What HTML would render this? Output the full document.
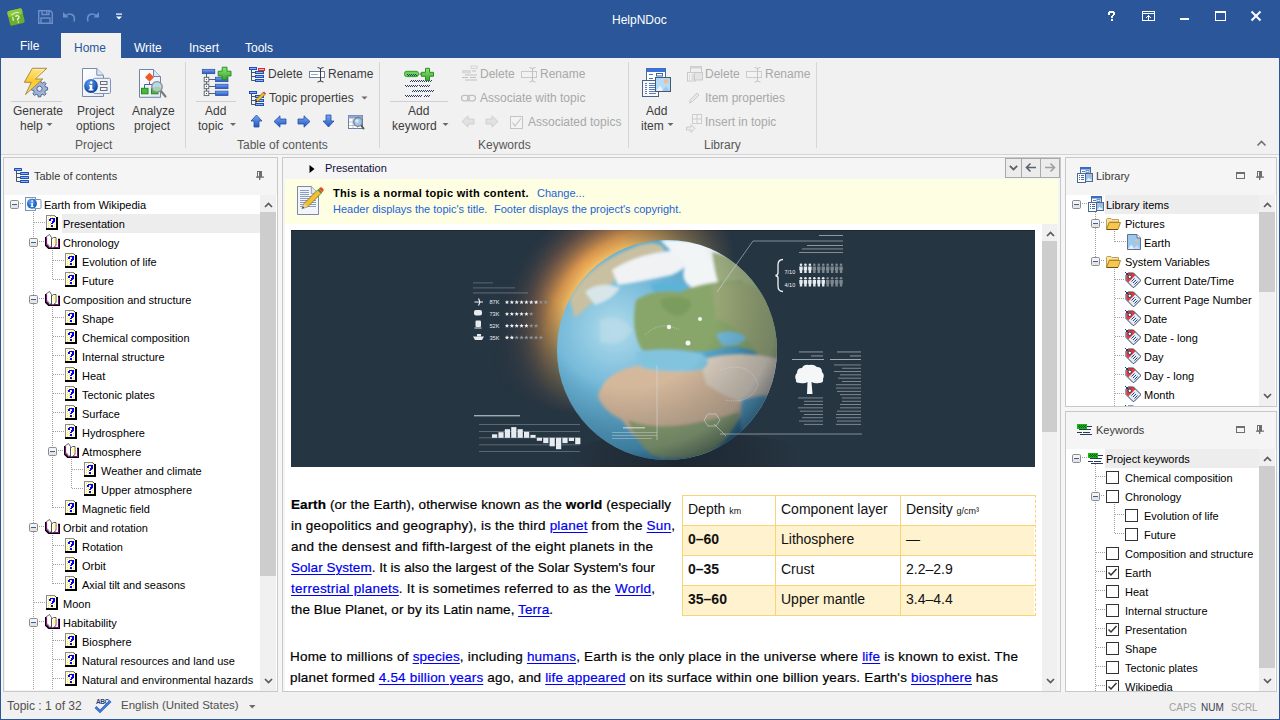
<!DOCTYPE html><html><head><meta charset="utf-8"><style>
*{margin:0;padding:0;box-sizing:border-box}
html,body{width:1280px;height:720px;overflow:hidden;background:#f1f1f1;font-family:"Liberation Sans",sans-serif;color:#000}
.a{position:absolute}
.t{position:absolute;white-space:nowrap;line-height:1}
.rb{font-size:12px;color:#3c3c3c}
.dis{color:#a8a8a8}
.grp{font-size:12px;color:#585858}
.sep{position:absolute;width:1px;background:#d6d6d6}
.tr{position:absolute;white-space:nowrap;font-size:11px;line-height:19px;height:19px;color:#000;padding-top:1px}
svg{position:absolute;overflow:visible}
.lnk{color:#0000f0;text-decoration:underline;text-underline-offset:2px}
</style></head><body>
<div class="a" style="left:0;top:0;width:1280px;height:58px;background:#2b579a"></div>
<div class="a" style="left:0;top:0;width:1px;height:720px;background:#2b579a"></div>
<div class="a" style="left:1279px;top:0;width:1px;height:720px;background:#2b579a"></div>
<div class="a" style="left:0;top:719px;width:1280px;height:1px;background:#2b579a"></div>
<div class="t" style="left:612px;top:14px;font-size:12px;color:#fff">HelpNDoc</div>
<div class="a" style="left:61px;top:33px;width:60px;height:26px;background:#f1f1f1"></div>
<div class="t" style="left:20px;top:40px;font-size:12px;color:#fff">File</div>
<div class="t" style="left:74px;top:42px;font-size:12px;color:#2b579a">Home</div>
<div class="t" style="left:134px;top:42px;font-size:12px;color:#fff">Write</div>
<div class="t" style="left:189px;top:42px;font-size:12px;color:#fff">Insert</div>
<div class="t" style="left:245px;top:42px;font-size:12px;color:#fff">Tools</div>
<div class="a" style="left:1px;top:154px;width:1278px;height:1px;background:#d4d4d4"></div>
<div class="a" style="left:1px;top:155px;width:1278px;height:2px;background:#f7f7f7"></div>
<div class="t rb" style="left:13px;top:105px;">Generate</div>
<div class="t rb" style="left:20px;top:120px;">help</div>
<div class="t rb" style="left:77px;top:105px;">Project</div>
<div class="t rb" style="left:76px;top:120px;">options</div>
<div class="t rb" style="left:132px;top:105px;">Analyze</div>
<div class="t rb" style="left:134px;top:120px;">project</div>
<div class="t grp" style="left:75px;top:139px;">Project</div>
<div class="sep" style="left:185px;top:62px;height:86px"></div>
<div class="t rb" style="left:205px;top:105px;">Add</div>
<div class="t rb" style="left:198px;top:120px;">topic</div>
<div class="t rb" style="left:268px;top:68px;">Delete</div>
<div class="t rb" style="left:328px;top:68px;">Rename</div>
<div class="t rb" style="left:269px;top:92px;">Topic properties</div>
<div class="t grp" style="left:237px;top:139px;">Table of contents</div>
<div class="sep" style="left:379px;top:62px;height:86px"></div>
<div class="t rb" style="left:408px;top:105px;">Add</div>
<div class="t rb" style="left:392px;top:120px;">keyword</div>
<div class="t rb dis" style="left:480px;top:68px;">Delete</div>
<div class="t rb dis" style="left:540px;top:68px;">Rename</div>
<div class="t rb dis" style="left:480px;top:92px;">Associate with topic</div>
<div class="t rb dis" style="left:528px;top:116px;">Associated topics</div>
<div class="t grp" style="left:478px;top:139px;">Keywords</div>
<div class="sep" style="left:628px;top:62px;height:86px"></div>
<div class="t rb" style="left:646px;top:105px;">Add</div>
<div class="t rb" style="left:641px;top:120px;">item</div>
<div class="t rb dis" style="left:705px;top:68px;">Delete</div>
<div class="t rb dis" style="left:765px;top:68px;">Rename</div>
<div class="t rb dis" style="left:705px;top:92px;">Item properties</div>
<div class="t rb dis" style="left:705px;top:116px;">Insert in topic</div>
<div class="t grp" style="left:704px;top:139px;">Library</div>
<div class="sep" style="left:816px;top:62px;height:86px"></div>
<div class="a" style="left:11px;top:101px;width:51px;height:1px;background:#d0d0d0"></div>
<div class="a" style="left:196px;top:101px;width:40px;height:1px;background:#d0d0d0"></div>
<div class="a" style="left:390px;top:101px;width:58px;height:1px;background:#d0d0d0"></div>
<div class="a" style="left:1px;top:155px;width:1278px;height:537px;background:#f6f6f6"></div>
<div class="a" style="left:3px;top:157px;width:275px;height:535px;border:1px solid #c8c8c8;background:#f5f5f5"></div>
<div class="a" style="left:282px;top:157px;width:779px;height:535px;border:1px solid #c8c8c8;background:#f5f5f5"></div>
<div class="a" style="left:1065px;top:157px;width:212px;height:250px;border:1px solid #c8c8c8;background:#f5f5f5"></div>
<div class="a" style="left:1065px;top:411px;width:212px;height:281px;border:1px solid #c8c8c8;background:#f5f5f5"></div>
<div class="t " style="left:7px;top:700px;font-size:12px;color:#505050">Topic : 1 of 32</div>
<div class="t " style="left:121px;top:700px;font-size:11.5px;color:#505050">English (United States)</div>
<svg style="left:94px;top:697px" width="18" height="17"><text x="2" y="6.5" font-family="Liberation Sans" font-weight="bold" font-size="6.5" fill="#1f3f7a" letter-spacing="-0.4">ABC</text><path d="M1.5 10L6 14.5L16.5 4" fill="none" stroke="#2a5fc8" stroke-width="2.6"/><path d="M1.5 10L6 14.5L16.5 4" fill="none" stroke="#5a90ea" stroke-width="1"/></svg>
<svg style="left:249px;top:705px" width="7" height="4"><path d="M0 0H6.5L3.25 3.5Z" fill="#6a6a6a"/></svg>
<div class="t " style="left:1169px;top:703px;font-size:10px;color:#a0a0a0">CAPS</div>
<div class="t " style="left:1201px;top:703px;font-size:10px;color:#404050">NUM</div>
<div class="t " style="left:1231px;top:703px;font-size:10px;color:#a0a0a0">SCRL</div>
<svg width="0" height="0" style="position:absolute"><defs>
<symbol id="minus" viewBox="0 0 9 9"><rect x="0.5" y="0.5" width="8" height="8" rx="1.2" fill="#f4f4f4" stroke="#8c8c8c"/><rect x="1" y="5" width="7" height="3" fill="#e4e4e4"/><rect x="2" y="4" width="5" height="1" fill="#3c5aa8"/></symbol>
<symbol id="help" viewBox="0 0 12 15" shape-rendering="crispEdges"><rect x="0" y="0" width="10" height="13" fill="#fff"/><rect x="0" y="0" width="9" height="1" fill="#8a8a8a"/><rect x="0" y="0" width="1" height="13" fill="#8a8a8a"/><rect x="9" y="1" width="1" height="1" fill="#555"/><rect x="10" y="2" width="2" height="13" fill="#000"/><rect x="0" y="13" width="12" height="2" fill="#000"/><g fill="#ffee00"><rect x="4" y="1" width="1" height="1"/><rect x="8" y="1" width="1" height="1"/><rect x="2" y="2" width="1" height="1"/><rect x="6" y="2" width="1" height="1"/><rect x="2" y="4" width="1" height="1"/><rect x="6" y="4" width="1" height="1"/><rect x="2" y="6" width="1" height="1"/><rect x="4" y="7" width="1" height="1"/><rect x="8" y="7" width="1" height="1"/><rect x="2" y="8" width="1" height="1"/><rect x="4" y="9" width="1" height="1"/><rect x="8" y="9" width="1" height="1"/><rect x="2" y="10" width="1" height="1"/><rect x="4" y="11" width="1" height="1"/><rect x="8" y="11" width="1" height="1"/><rect x="2" y="12" width="1" height="1"/><rect x="6" y="12" width="1" height="1"/></g><g fill="#0000ff"><rect x="3" y="4" width="1" height="1"/><rect x="3" y="5" width="1" height="1"/><rect x="4" y="3" width="1" height="1"/><rect x="4" y="4" width="1" height="1"/><rect x="4" y="5" width="1" height="1"/><rect x="5" y="3" width="1" height="1"/><rect x="5" y="8" width="1" height="1"/><rect x="5" y="10" width="1" height="1"/><rect x="5" y="11" width="1" height="1"/><rect x="6" y="3" width="1" height="1"/><rect x="6" y="6" width="1" height="1"/><rect x="6" y="7" width="1" height="1"/><rect x="6" y="8" width="1" height="1"/><rect x="6" y="10" width="1" height="1"/><rect x="6" y="11" width="1" height="1"/><rect x="7" y="3" width="1" height="1"/><rect x="7" y="4" width="1" height="1"/><rect x="7" y="5" width="1" height="1"/><rect x="7" y="6" width="1" height="1"/><rect x="7" y="7" width="1" height="1"/><rect x="8" y="3" width="1" height="1"/><rect x="8" y="4" width="1" height="1"/><rect x="8" y="5" width="1" height="1"/><rect x="8" y="6" width="1" height="1"/></g></symbol>
<symbol id="book" viewBox="0 0 15 15"><path d="M1 3L4.5 0.5L6.5 3.5V14L4 11.5L1 9Z" fill="#fff" stroke="#444" stroke-width="0.8"/><path d="M0.5 3V11L4 14.5H14.5V5.5H13" fill="none" stroke="#000" stroke-width="1.6"/><path d="M1.6 3.5V10.6L4.4 13.5H13.5V6" fill="none" stroke="#8b008b" stroke-width="1"/><path d="M6.5 14V5L8.5 3.5H11V11.5L8.5 13.5Z" fill="#fff" stroke="#333" stroke-width="0.8"/><g fill="#ffe800"><rect x="8.5" y="5.5" width="1" height="1"/><rect x="10" y="4.5" width="1" height="1"/><rect x="8.5" y="7.5" width="1" height="1"/><rect x="10" y="6.5" width="1" height="1"/><rect x="8.5" y="9.5" width="1" height="1"/><rect x="10" y="8.5" width="1" height="1"/></g></symbol>
<symbol id="info" viewBox="0 0 17 14"><rect x="0.5" y="0.5" width="10" height="13" fill="#f4f8fc" stroke="#7f95b5"/><rect x="8.5" y="2.5" width="7.5" height="9" rx="1" fill="#fff" stroke="#7f95b5"/><circle cx="7" cy="6.7" r="5" fill="#2468c8"/><circle cx="6.3" cy="5.3" r="3" fill="#4f93e6"/><rect x="6.3" y="5.8" width="1.6" height="4" fill="#fff"/><rect x="5.6" y="9.2" width="3" height="0.9" fill="#fff"/><rect x="6.4" y="3.3" width="1.5" height="1.5" fill="#fff"/></symbol>
<symbol id="lib" viewBox="0 0 16 16"><rect x="3.5" y="0.5" width="10" height="9" fill="#fff" stroke="#4a6a96"/><rect x="3.5" y="0.5" width="10" height="2" fill="#2f6fd6"/><rect x="5" y="4" width="3" height="1" fill="#5b7bb0"/><rect x="9" y="3.5" width="3" height="2" fill="none" stroke="#5b7bb0" stroke-width="0.8"/><rect x="0.5" y="6.5" width="8" height="9" fill="#fff" stroke="#4a6a96"/><g fill="#4a6aa6"><rect x="2" y="8" width="1" height="1"/><rect x="4" y="8" width="3" height="1"/><rect x="2" y="10" width="1" height="1"/><rect x="4" y="10" width="3" height="1"/><rect x="2" y="12" width="1" height="1"/><rect x="4" y="12" width="3" height="1"/></g><rect x="8.5" y="6.5" width="7" height="8" fill="#8ec4ee" stroke="#4a6a96"/><path d="M9 14L11.5 10.5L13 12.5L14 11.5L15 14Z" fill="#e8f2fb"/><circle cx="13.2" cy="8.8" r="1" fill="#f7a15a"/></symbol>
<symbol id="folder" viewBox="0 0 15 12"><path d="M0.5 1.5Q0.5 0.5 1.5 0.5H5L6 1.5H12.5V4H3.5L0.5 11.5Z" fill="#fbe2a0" stroke="#b08a30" stroke-width="0.8"/><path d="M0.5 11.5L3.2 4.5H14.5L12 11.5Z" fill="#f6c64e" stroke="#9c7420" stroke-width="0.8"/><path d="M1 11.5H12" stroke="#6b4e10" stroke-width="1"/></symbol>
<symbol id="img" viewBox="0 0 14 16"><path d="M0.5 0.5H10L13.5 4V15.5H0.5Z" fill="#9cc8ee" stroke="#5b7390"/><path d="M10 0.5V4H13.5" fill="#fff" stroke="#5b7390"/><path d="M1 15L4.2 10.5L7.5 15Z" fill="#e6eef8"/><path d="M6 15L10 11L13 15Z" fill="#c9daf0"/><circle cx="9.5" cy="6.5" r="1.5" fill="#f5b88a"/></symbol>
<symbol id="tag" viewBox="0 0 16 16"><path d="M1 3L3 1H8.5L15.3 7.8Q15.8 8.5 15.3 9.2L9.2 15.3Q8.5 15.8 7.8 15.3L1 8.5Z" fill="#e4ebf4" stroke="#243e62" stroke-width="1"/><path d="M1.5 3.2L3.2 1.5H8.3L10.2 3.4L3.4 10.2L1.5 8.3Z" fill="#e63a3a"/><path d="M3.2 1.5H8.3L10.2 3.4" fill="none" stroke="#c02828" stroke-width="0.8"/><circle cx="4.8" cy="4.8" r="1.7" fill="#fff" stroke="#243e62" stroke-width="1"/><path d="M0 0L3.6 3.6" stroke="#243e62" stroke-width="1"/><path d="M6.5 9.5L9.5 6.5M8 11L11 8M9.5 12.5L12.5 9.5" stroke="#2a4670" stroke-width="1"/></symbol>
<symbol id="kw" viewBox="0 0 15 11" shape-rendering="crispEdges"><rect x="0" y="0" width="10" height="5" fill="#18b418"/><g fill="#0c5a0c"><rect x="1" y="2" width="1" height="1"/><rect x="3" y="2" width="1" height="1"/><rect x="5" y="2" width="1" height="1"/><rect x="7" y="2" width="1" height="1"/><rect x="2" y="1" width="1" height="1"/><rect x="4" y="1" width="1" height="1"/><rect x="6" y="1" width="1" height="1"/><rect x="8" y="1" width="1" height="1"/><rect x="2" y="3" width="1" height="1"/><rect x="4" y="3" width="1" height="1"/><rect x="6" y="3" width="1" height="1"/><rect x="8" y="3" width="1" height="1"/></g><g fill="#2a3a5c"><rect x="10" y="2" width="5" height="1"/><rect x="2" y="5" width="12" height="1"/><rect x="0" y="8" width="5" height="1"/><rect x="6" y="8" width="7" height="1"/><rect x="3" y="10" width="12" height="1"/></g></symbol>
<symbol id="cb" viewBox="0 0 13 13"><rect x="0.5" y="0.5" width="12" height="12" fill="#fff" stroke="#333"/></symbol>
<symbol id="cbc" viewBox="0 0 13 13"><rect x="0.5" y="0.5" width="12" height="12" fill="#fff" stroke="#333"/><path d="M2.5 6.5L5 9L10.5 3" fill="none" stroke="#333" stroke-width="1.5"/></symbol>
<symbol id="up" viewBox="0 0 9 6"><path d="M1 5L4.5 1.5L8 5" fill="none" stroke="#5a5a5a" stroke-width="1.7"/></symbol>
<symbol id="dn" viewBox="0 0 9 6"><path d="M1 1L4.5 4.5L8 1" fill="none" stroke="#5a5a5a" stroke-width="1.7"/></symbol>
</defs></svg>
<div class="a" style="left:5px;top:195px;width:272px;height:495px;background:#fff;overflow:hidden">
<div class="a" style="left:-5px;top:-195px;width:1280px;height:720px"><div class="a" style="left:62px;top:214px;width:198px;height:19px;background:#ededed"></div><!--v--><div class="a" style="left:33px;top:210px;width:1px;height:507px;background:repeating-linear-gradient(#a0a0a0 0 1px,transparent 1px 2px)"></div><div class="a" style="left:20px;top:203px;width:4px;height:1px;background:repeating-linear-gradient(90deg,#a0a0a0 0 1px,transparent 1px 2px)"></div><svg style="left:10px;top:200px" width="9" height="9"><use href="#minus"/></svg><svg style="left:25px;top:197px" width="17" height="14"><use href="#info"/></svg><div class="tr" style="left:44px;top:195px">Earth from Wikipedia</div><div class="a" style="left:34px;top:222px;width:11px;height:1px;background:repeating-linear-gradient(90deg,#a0a0a0 0 1px,transparent 1px 2px)"></div><svg style="left:46px;top:215px" width="12" height="15"><use href="#help"/></svg><div class="tr" style="left:63px;top:214px">Presentation</div><!--v--><div class="a" style="left:52px;top:248px;width:1px;height:32px;background:repeating-linear-gradient(#a0a0a0 0 1px,transparent 1px 2px)"></div><div class="a" style="left:39px;top:241px;width:5px;height:1px;background:repeating-linear-gradient(90deg,#a0a0a0 0 1px,transparent 1px 2px)"></div><svg style="left:29px;top:238px" width="9" height="9"><use href="#minus"/></svg><svg style="left:45px;top:234px" width="15" height="15"><use href="#book"/></svg><div class="tr" style="left:63px;top:233px">Chronology</div><div class="a" style="left:53px;top:260px;width:11px;height:1px;background:repeating-linear-gradient(90deg,#a0a0a0 0 1px,transparent 1px 2px)"></div><svg style="left:65px;top:253px" width="12" height="15"><use href="#help"/></svg><div class="tr" style="left:82px;top:252px">Evolution of life</div><div class="a" style="left:53px;top:279px;width:11px;height:1px;background:repeating-linear-gradient(90deg,#a0a0a0 0 1px,transparent 1px 2px)"></div><svg style="left:65px;top:272px" width="12" height="15"><use href="#help"/></svg><div class="tr" style="left:82px;top:271px">Future</div><!--v--><div class="a" style="left:52px;top:305px;width:1px;height:203px;background:repeating-linear-gradient(#a0a0a0 0 1px,transparent 1px 2px)"></div><div class="a" style="left:39px;top:298px;width:5px;height:1px;background:repeating-linear-gradient(90deg,#a0a0a0 0 1px,transparent 1px 2px)"></div><svg style="left:29px;top:295px" width="9" height="9"><use href="#minus"/></svg><svg style="left:45px;top:291px" width="15" height="15"><use href="#book"/></svg><div class="tr" style="left:63px;top:290px">Composition and structure</div><div class="a" style="left:53px;top:317px;width:11px;height:1px;background:repeating-linear-gradient(90deg,#a0a0a0 0 1px,transparent 1px 2px)"></div><svg style="left:65px;top:310px" width="12" height="15"><use href="#help"/></svg><div class="tr" style="left:82px;top:309px">Shape</div><div class="a" style="left:53px;top:336px;width:11px;height:1px;background:repeating-linear-gradient(90deg,#a0a0a0 0 1px,transparent 1px 2px)"></div><svg style="left:65px;top:329px" width="12" height="15"><use href="#help"/></svg><div class="tr" style="left:82px;top:328px">Chemical composition</div><div class="a" style="left:53px;top:355px;width:11px;height:1px;background:repeating-linear-gradient(90deg,#a0a0a0 0 1px,transparent 1px 2px)"></div><svg style="left:65px;top:348px" width="12" height="15"><use href="#help"/></svg><div class="tr" style="left:82px;top:347px">Internal structure</div><div class="a" style="left:53px;top:374px;width:11px;height:1px;background:repeating-linear-gradient(90deg,#a0a0a0 0 1px,transparent 1px 2px)"></div><svg style="left:65px;top:367px" width="12" height="15"><use href="#help"/></svg><div class="tr" style="left:82px;top:366px">Heat</div><div class="a" style="left:53px;top:393px;width:11px;height:1px;background:repeating-linear-gradient(90deg,#a0a0a0 0 1px,transparent 1px 2px)"></div><svg style="left:65px;top:386px" width="12" height="15"><use href="#help"/></svg><div class="tr" style="left:82px;top:385px">Tectonic plates</div><div class="a" style="left:53px;top:412px;width:11px;height:1px;background:repeating-linear-gradient(90deg,#a0a0a0 0 1px,transparent 1px 2px)"></div><svg style="left:65px;top:405px" width="12" height="15"><use href="#help"/></svg><div class="tr" style="left:82px;top:404px">Surface</div><div class="a" style="left:53px;top:431px;width:11px;height:1px;background:repeating-linear-gradient(90deg,#a0a0a0 0 1px,transparent 1px 2px)"></div><svg style="left:65px;top:424px" width="12" height="15"><use href="#help"/></svg><div class="tr" style="left:82px;top:423px">Hydrosphere</div><!--v--><div class="a" style="left:71px;top:457px;width:1px;height:32px;background:repeating-linear-gradient(#a0a0a0 0 1px,transparent 1px 2px)"></div><div class="a" style="left:58px;top:450px;width:5px;height:1px;background:repeating-linear-gradient(90deg,#a0a0a0 0 1px,transparent 1px 2px)"></div><svg style="left:48px;top:447px" width="9" height="9"><use href="#minus"/></svg><svg style="left:64px;top:443px" width="15" height="15"><use href="#book"/></svg><div class="tr" style="left:82px;top:442px">Atmosphere</div><div class="a" style="left:72px;top:469px;width:11px;height:1px;background:repeating-linear-gradient(90deg,#a0a0a0 0 1px,transparent 1px 2px)"></div><svg style="left:84px;top:462px" width="12" height="15"><use href="#help"/></svg><div class="tr" style="left:101px;top:461px">Weather and climate</div><div class="a" style="left:72px;top:488px;width:11px;height:1px;background:repeating-linear-gradient(90deg,#a0a0a0 0 1px,transparent 1px 2px)"></div><svg style="left:84px;top:481px" width="12" height="15"><use href="#help"/></svg><div class="tr" style="left:101px;top:480px">Upper atmosphere</div><div class="a" style="left:53px;top:507px;width:11px;height:1px;background:repeating-linear-gradient(90deg,#a0a0a0 0 1px,transparent 1px 2px)"></div><svg style="left:65px;top:500px" width="12" height="15"><use href="#help"/></svg><div class="tr" style="left:82px;top:499px">Magnetic field</div><!--v--><div class="a" style="left:52px;top:533px;width:1px;height:51px;background:repeating-linear-gradient(#a0a0a0 0 1px,transparent 1px 2px)"></div><div class="a" style="left:39px;top:526px;width:5px;height:1px;background:repeating-linear-gradient(90deg,#a0a0a0 0 1px,transparent 1px 2px)"></div><svg style="left:29px;top:523px" width="9" height="9"><use href="#minus"/></svg><svg style="left:45px;top:519px" width="15" height="15"><use href="#book"/></svg><div class="tr" style="left:63px;top:518px">Orbit and rotation</div><div class="a" style="left:53px;top:545px;width:11px;height:1px;background:repeating-linear-gradient(90deg,#a0a0a0 0 1px,transparent 1px 2px)"></div><svg style="left:65px;top:538px" width="12" height="15"><use href="#help"/></svg><div class="tr" style="left:82px;top:537px">Rotation</div><div class="a" style="left:53px;top:564px;width:11px;height:1px;background:repeating-linear-gradient(90deg,#a0a0a0 0 1px,transparent 1px 2px)"></div><svg style="left:65px;top:557px" width="12" height="15"><use href="#help"/></svg><div class="tr" style="left:82px;top:556px">Orbit</div><div class="a" style="left:53px;top:583px;width:11px;height:1px;background:repeating-linear-gradient(90deg,#a0a0a0 0 1px,transparent 1px 2px)"></div><svg style="left:65px;top:576px" width="12" height="15"><use href="#help"/></svg><div class="tr" style="left:82px;top:575px">Axial tilt and seasons</div><div class="a" style="left:34px;top:602px;width:11px;height:1px;background:repeating-linear-gradient(90deg,#a0a0a0 0 1px,transparent 1px 2px)"></div><svg style="left:46px;top:595px" width="12" height="15"><use href="#help"/></svg><div class="tr" style="left:63px;top:594px">Moon</div><!--v--><div class="a" style="left:52px;top:628px;width:1px;height:70px;background:repeating-linear-gradient(#a0a0a0 0 1px,transparent 1px 2px)"></div><div class="a" style="left:39px;top:621px;width:5px;height:1px;background:repeating-linear-gradient(90deg,#a0a0a0 0 1px,transparent 1px 2px)"></div><svg style="left:29px;top:618px" width="9" height="9"><use href="#minus"/></svg><svg style="left:45px;top:614px" width="15" height="15"><use href="#book"/></svg><div class="tr" style="left:63px;top:613px">Habitability</div><div class="a" style="left:53px;top:640px;width:11px;height:1px;background:repeating-linear-gradient(90deg,#a0a0a0 0 1px,transparent 1px 2px)"></div><svg style="left:65px;top:633px" width="12" height="15"><use href="#help"/></svg><div class="tr" style="left:82px;top:632px">Biosphere</div><div class="a" style="left:53px;top:659px;width:11px;height:1px;background:repeating-linear-gradient(90deg,#a0a0a0 0 1px,transparent 1px 2px)"></div><svg style="left:65px;top:652px" width="12" height="15"><use href="#help"/></svg><div class="tr" style="left:82px;top:651px">Natural resources and land use</div><div class="a" style="left:53px;top:678px;width:11px;height:1px;background:repeating-linear-gradient(90deg,#a0a0a0 0 1px,transparent 1px 2px)"></div><svg style="left:65px;top:671px" width="12" height="15"><use href="#help"/></svg><div class="tr" style="left:82px;top:670px">Natural and environmental hazards</div><div class="a" style="left:53px;top:697px;width:11px;height:1px;background:repeating-linear-gradient(90deg,#a0a0a0 0 1px,transparent 1px 2px)"></div><svg style="left:65px;top:690px" width="12" height="15"><use href="#help"/></svg><div class="tr" style="left:82px;top:689px">Natural satellites</div><!--v--><div class="a" style="left:52px;top:723px;width:1px;height:13px;background:repeating-linear-gradient(#a0a0a0 0 1px,transparent 1px 2px)"></div><div class="a" style="left:39px;top:716px;width:5px;height:1px;background:repeating-linear-gradient(90deg,#a0a0a0 0 1px,transparent 1px 2px)"></div><svg style="left:29px;top:713px" width="9" height="9"><use href="#minus"/></svg><svg style="left:45px;top:709px" width="15" height="15"><use href="#book"/></svg><div class="tr" style="left:63px;top:708px">Human geography</div><div class="a" style="left:53px;top:735px;width:11px;height:1px;background:repeating-linear-gradient(90deg,#a0a0a0 0 1px,transparent 1px 2px)"></div><svg style="left:65px;top:728px" width="12" height="15"><use href="#help"/></svg><div class="tr" style="left:82px;top:727px">Cultural viewpoint</div></div></div>
<div class="a" style="left:1066px;top:195px;width:210px;height:211px;background:#fff;overflow:hidden">
<div class="a" style="left:-1066px;top:-195px;width:1280px;height:720px"><div class="a" style="left:1105px;top:195px;width:154px;height:19px;background:#ededed"></div><!--v--><div class="a" style="left:1095px;top:210px;width:1px;height:51px;background:repeating-linear-gradient(#a0a0a0 0 1px,transparent 1px 2px)"></div><div class="a" style="left:1082px;top:203px;width:5px;height:1px;background:repeating-linear-gradient(90deg,#a0a0a0 0 1px,transparent 1px 2px)"></div><svg style="left:1072px;top:200px" width="9" height="9"><use href="#minus"/></svg><svg style="left:1088px;top:196px" width="16" height="16"><use href="#lib"/></svg><div class="tr" style="left:1106px;top:195px">Library items</div><!--v--><div class="a" style="left:1114px;top:229px;width:1px;height:13px;background:repeating-linear-gradient(#a0a0a0 0 1px,transparent 1px 2px)"></div><div class="a" style="left:1101px;top:222px;width:4px;height:1px;background:repeating-linear-gradient(90deg,#a0a0a0 0 1px,transparent 1px 2px)"></div><svg style="left:1091px;top:219px" width="9" height="9"><use href="#minus"/></svg><svg style="left:1106px;top:218px" width="15" height="12"><use href="#folder"/></svg><div class="tr" style="left:1125px;top:214px">Pictures</div><div class="a" style="left:1115px;top:241px;width:11px;height:1px;background:repeating-linear-gradient(90deg,#a0a0a0 0 1px,transparent 1px 2px)"></div><svg style="left:1127px;top:234px" width="14" height="16"><use href="#img"/></svg><div class="tr" style="left:1144px;top:233px">Earth</div><!--v--><div class="a" style="left:1114px;top:267px;width:1px;height:146px;background:repeating-linear-gradient(#a0a0a0 0 1px,transparent 1px 2px)"></div><div class="a" style="left:1101px;top:260px;width:4px;height:1px;background:repeating-linear-gradient(90deg,#a0a0a0 0 1px,transparent 1px 2px)"></div><svg style="left:1091px;top:257px" width="9" height="9"><use href="#minus"/></svg><svg style="left:1106px;top:256px" width="15" height="12"><use href="#folder"/></svg><div class="tr" style="left:1125px;top:252px">System Variables</div><div class="a" style="left:1115px;top:279px;width:9px;height:1px;background:repeating-linear-gradient(90deg,#a0a0a0 0 1px,transparent 1px 2px)"></div><svg style="left:1125px;top:272px" width="16" height="16"><use href="#tag"/></svg><div class="tr" style="left:1144px;top:271px">Current Date/Time</div><div class="a" style="left:1115px;top:298px;width:9px;height:1px;background:repeating-linear-gradient(90deg,#a0a0a0 0 1px,transparent 1px 2px)"></div><svg style="left:1125px;top:291px" width="16" height="16"><use href="#tag"/></svg><div class="tr" style="left:1144px;top:290px">Current Page Number</div><div class="a" style="left:1115px;top:317px;width:9px;height:1px;background:repeating-linear-gradient(90deg,#a0a0a0 0 1px,transparent 1px 2px)"></div><svg style="left:1125px;top:310px" width="16" height="16"><use href="#tag"/></svg><div class="tr" style="left:1144px;top:309px">Date</div><div class="a" style="left:1115px;top:336px;width:9px;height:1px;background:repeating-linear-gradient(90deg,#a0a0a0 0 1px,transparent 1px 2px)"></div><svg style="left:1125px;top:329px" width="16" height="16"><use href="#tag"/></svg><div class="tr" style="left:1144px;top:328px">Date - long</div><div class="a" style="left:1115px;top:355px;width:9px;height:1px;background:repeating-linear-gradient(90deg,#a0a0a0 0 1px,transparent 1px 2px)"></div><svg style="left:1125px;top:348px" width="16" height="16"><use href="#tag"/></svg><div class="tr" style="left:1144px;top:347px">Day</div><div class="a" style="left:1115px;top:374px;width:9px;height:1px;background:repeating-linear-gradient(90deg,#a0a0a0 0 1px,transparent 1px 2px)"></div><svg style="left:1125px;top:367px" width="16" height="16"><use href="#tag"/></svg><div class="tr" style="left:1144px;top:366px">Day - long</div><div class="a" style="left:1115px;top:393px;width:9px;height:1px;background:repeating-linear-gradient(90deg,#a0a0a0 0 1px,transparent 1px 2px)"></div><svg style="left:1125px;top:386px" width="16" height="16"><use href="#tag"/></svg><div class="tr" style="left:1144px;top:385px">Month</div><div class="a" style="left:1115px;top:412px;width:9px;height:1px;background:repeating-linear-gradient(90deg,#a0a0a0 0 1px,transparent 1px 2px)"></div><svg style="left:1125px;top:405px" width="16" height="16"><use href="#tag"/></svg><div class="tr" style="left:1144px;top:404px">Month - long</div></div></div>
<div class="a" style="left:1066px;top:449px;width:210px;height:242px;background:#fff;overflow:hidden">
<div class="a" style="left:-1066px;top:-449px;width:1280px;height:720px"><div class="a" style="left:1105px;top:449px;width:154px;height:19px;background:#ededed"></div><!--v--><div class="a" style="left:1095px;top:464px;width:1px;height:241px;background:repeating-linear-gradient(#a0a0a0 0 1px,transparent 1px 2px)"></div><div class="a" style="left:1082px;top:457px;width:5px;height:1px;background:repeating-linear-gradient(90deg,#a0a0a0 0 1px,transparent 1px 2px)"></div><svg style="left:1072px;top:454px" width="9" height="9"><use href="#minus"/></svg><svg style="left:1088px;top:453px" width="15" height="11"><use href="#kw"/></svg><div class="tr" style="left:1106px;top:449px">Project keywords</div><div class="a" style="left:1096px;top:476px;width:9px;height:1px;background:repeating-linear-gradient(90deg,#a0a0a0 0 1px,transparent 1px 2px)"></div><svg style="left:1106px;top:471px" width="13" height="13"><use href="#cb"/></svg><div class="tr" style="left:1125px;top:468px">Chemical composition</div><!--v--><div class="a" style="left:1114px;top:502px;width:1px;height:32px;background:repeating-linear-gradient(#a0a0a0 0 1px,transparent 1px 2px)"></div><div class="a" style="left:1101px;top:495px;width:4px;height:1px;background:repeating-linear-gradient(90deg,#a0a0a0 0 1px,transparent 1px 2px)"></div><svg style="left:1091px;top:492px" width="9" height="9"><use href="#minus"/></svg><svg style="left:1106px;top:490px" width="13" height="13"><use href="#cb"/></svg><div class="tr" style="left:1125px;top:487px">Chronology</div><div class="a" style="left:1115px;top:514px;width:9px;height:1px;background:repeating-linear-gradient(90deg,#a0a0a0 0 1px,transparent 1px 2px)"></div><svg style="left:1125px;top:509px" width="13" height="13"><use href="#cb"/></svg><div class="tr" style="left:1144px;top:506px">Evolution of life</div><div class="a" style="left:1115px;top:533px;width:9px;height:1px;background:repeating-linear-gradient(90deg,#a0a0a0 0 1px,transparent 1px 2px)"></div><svg style="left:1125px;top:528px" width="13" height="13"><use href="#cb"/></svg><div class="tr" style="left:1144px;top:525px">Future</div><div class="a" style="left:1096px;top:552px;width:9px;height:1px;background:repeating-linear-gradient(90deg,#a0a0a0 0 1px,transparent 1px 2px)"></div><svg style="left:1106px;top:547px" width="13" height="13"><use href="#cb"/></svg><div class="tr" style="left:1125px;top:544px">Composition and structure</div><div class="a" style="left:1096px;top:571px;width:9px;height:1px;background:repeating-linear-gradient(90deg,#a0a0a0 0 1px,transparent 1px 2px)"></div><svg style="left:1106px;top:566px" width="13" height="13"><use href="#cbc"/></svg><div class="tr" style="left:1125px;top:563px">Earth</div><div class="a" style="left:1096px;top:590px;width:9px;height:1px;background:repeating-linear-gradient(90deg,#a0a0a0 0 1px,transparent 1px 2px)"></div><svg style="left:1106px;top:585px" width="13" height="13"><use href="#cb"/></svg><div class="tr" style="left:1125px;top:582px">Heat</div><div class="a" style="left:1096px;top:609px;width:9px;height:1px;background:repeating-linear-gradient(90deg,#a0a0a0 0 1px,transparent 1px 2px)"></div><svg style="left:1106px;top:604px" width="13" height="13"><use href="#cb"/></svg><div class="tr" style="left:1125px;top:601px">Internal structure</div><div class="a" style="left:1096px;top:628px;width:9px;height:1px;background:repeating-linear-gradient(90deg,#a0a0a0 0 1px,transparent 1px 2px)"></div><svg style="left:1106px;top:623px" width="13" height="13"><use href="#cbc"/></svg><div class="tr" style="left:1125px;top:620px">Presentation</div><div class="a" style="left:1096px;top:647px;width:9px;height:1px;background:repeating-linear-gradient(90deg,#a0a0a0 0 1px,transparent 1px 2px)"></div><svg style="left:1106px;top:642px" width="13" height="13"><use href="#cb"/></svg><div class="tr" style="left:1125px;top:639px">Shape</div><div class="a" style="left:1096px;top:666px;width:9px;height:1px;background:repeating-linear-gradient(90deg,#a0a0a0 0 1px,transparent 1px 2px)"></div><svg style="left:1106px;top:661px" width="13" height="13"><use href="#cb"/></svg><div class="tr" style="left:1125px;top:658px">Tectonic plates</div><div class="a" style="left:1096px;top:685px;width:9px;height:1px;background:repeating-linear-gradient(90deg,#a0a0a0 0 1px,transparent 1px 2px)"></div><svg style="left:1106px;top:680px" width="13" height="13"><use href="#cbc"/></svg><div class="tr" style="left:1125px;top:677px">Wikipedia</div><div class="a" style="left:1096px;top:704px;width:9px;height:1px;background:repeating-linear-gradient(90deg,#a0a0a0 0 1px,transparent 1px 2px)"></div><svg style="left:1106px;top:699px" width="13" height="13"><use href="#cb"/></svg><div class="tr" style="left:1125px;top:696px">Wildlife</div></div></div>
<div class="a" style="left:260px;top:195px;width:16px;height:496px;background:#f0f0f0"></div>
<div class="a" style="left:260px;top:212px;width:16px;height:364px;background:#cdcdcd"></div>
<svg style="left:264px;top:202px" width="9" height="6"><use href="#up"/></svg>
<svg style="left:264px;top:678px" width="9" height="6"><use href="#dn"/></svg>
<div class="a" style="left:1259px;top:195px;width:16px;height:211px;background:#f0f0f0"></div>
<div class="a" style="left:1259px;top:212px;width:16px;height:80px;background:#cdcdcd"></div>
<svg style="left:1263px;top:202px" width="9" height="6"><use href="#up"/></svg>
<svg style="left:1263px;top:393px" width="9" height="6"><use href="#dn"/></svg>
<div class="a" style="left:1259px;top:449px;width:16px;height:242px;background:#f0f0f0"></div>
<div class="a" style="left:1259px;top:466px;width:16px;height:202px;background:#cdcdcd"></div>
<svg style="left:1263px;top:456px" width="9" height="6"><use href="#up"/></svg>
<svg style="left:1263px;top:678px" width="9" height="6"><use href="#dn"/></svg>
<div class="a" style="left:283px;top:158px;width:777px;height:533px;background:#f5f5f5"></div>
<svg style="left:309px;top:165px" width="6" height="8"><path d="M0.5 0L5.5 4L0.5 8Z" fill="#000"/></svg>
<div class="t" style="left:325px;top:163px;font-size:11px;color:#10103a">Presentation</div>
<div class="a" style="left:1005px;top:158px;width:17px;height:20px;border:1px solid #a9a9a9;background:#ececec"></div>
<div class="a" style="left:1021px;top:158px;width:20px;height:20px;border:1px solid #a9a9a9;background:#ececec"></div>
<div class="a" style="left:1040px;top:158px;width:20px;height:20px;border:1px solid #a9a9a9;background:#ececec"></div>
<svg style="left:1009px;top:165px" width="9" height="6"><path d="M0.8 0.8L4.5 4.5L8.2 0.8" fill="none" stroke="#606060" stroke-width="1.8"/></svg>
<svg style="left:1025px;top:162px" width="12" height="11"><path d="M11 5.5H1.5M5.5 1.5L1.5 5.5L5.5 9.5" fill="none" stroke="#5a6270" stroke-width="1.6"/></svg>
<svg style="left:1044px;top:162px" width="12" height="11"><path d="M1 5.5H10.5M6.5 1.5L10.5 5.5L6.5 9.5" fill="none" stroke="#a0a0a0" stroke-width="1.6"/></svg>
<div class="a" style="left:285px;top:179px;width:773px;height:45px;background:#fefee2"></div>
<svg style="left:292px;top:182px" width="36" height="36" viewBox="292 182 36 36"><path d="M297.5 186.5H311.3L318.5 193.7V214.5H297.5Z" fill="#f2f5fb" stroke="#7a8aa6"/><path d="M311.3 186.5V193.7H318.5" fill="#dde6f5" stroke="#7a8aa6" stroke-width="0.8"/>
<g fill="#8a9cc0"><rect x="300" y="190" width="9" height="1"/><rect x="300" y="192" width="9" height="1"/><rect x="300" y="194" width="9" height="1"/><rect x="300" y="196" width="16" height="1"/><rect x="300" y="198" width="16" height="1"/><rect x="300" y="200" width="16" height="1"/><rect x="300" y="202" width="16" height="1"/><rect x="300" y="204" width="16" height="1"/><rect x="300" y="206" width="16" height="1"/></g>
<path d="M302 208.6L304.2 203.3L317.6 189.9L321.1 193.4L307.7 206.8Z" fill="#f0c233" stroke="#7a5a0c" stroke-width="0.7"/>
<path d="M302 208.6L304.2 203.3L307.7 206.8Z" fill="#e9cfa0"/><path d="M302 208.6L302.9 206.4L304.2 207.7Z" fill="#333"/>
<path d="M317.6 189.9L318.8 188.7L322.3 192.2L321.1 193.4Z" fill="#2f9a40"/>
<path d="M318.8 188.7L320 187.5Q321 186.8 322 187.6L323.4 189Q324.1 190 323.4 191L322.3 192.2Z" fill="#ee4a2a"/></svg>
<div class="t" style="left:333px;top:188px;font-size:11px;font-weight:bold;letter-spacing:0.33px">This is a normal topic with content.</div>
<div class="t" style="left:537px;top:188px;font-size:11px;color:#1c64d8">Change...</div>
<div class="t" style="left:333px;top:204px;font-size:11px;color:#1c64d8">Header displays the topic&#39;s title.</div>
<div class="t" style="left:494px;top:204px;font-size:11px;color:#1c64d8">Footer displays the project&#39;s copyright.</div>
<div class="a" style="left:285px;top:224px;width:757px;height:467px;background:#fff"></div>
<div class="a" style="left:1042px;top:224px;width:15px;height:467px;background:#f0f0f0"></div>
<div class="a" style="left:1042px;top:241px;width:15px;height:191px;background:#cdcdcd"></div>
<svg style="left:1046px;top:231px" width="9" height="6"><use href="#up"/></svg>
<svg style="left:1046px;top:678px" width="9" height="6"><use href="#dn"/></svg>
<svg style="left:291px;top:230px;overflow:hidden" width="744" height="237" viewBox="291 230 744 237">
<defs>
<radialGradient id="glow" cx="667" cy="350" r="175" gradientUnits="userSpaceOnUse"><stop offset="0.62" stop-color="#ffc868"/><stop offset="0.7" stop-color="#f0a24e" stop-opacity="0.9"/><stop offset="0.84" stop-color="#a06848" stop-opacity="0.42"/><stop offset="1" stop-color="#263542" stop-opacity="0"/></radialGradient><radialGradient id="gm" cx="585" cy="265" r="150" gradientUnits="userSpaceOnUse"><stop offset="0" stop-color="#fff"/><stop offset="0.3" stop-color="#fff" stop-opacity="0.9"/><stop offset="0.65" stop-color="#fff" stop-opacity="0.4"/><stop offset="1" stop-color="#fff" stop-opacity="0"/></radialGradient><mask id="gmask" maskUnits="userSpaceOnUse" x="291" y="230" width="744" height="237"><rect x="291" y="230" width="744" height="237" fill="url(#gm)"/></mask>
<radialGradient id="ocean" cx="615" cy="330" r="165" gradientUnits="userSpaceOnUse"><stop offset="0" stop-color="#b0dcec"/><stop offset="0.4" stop-color="#6cb4d6"/><stop offset="0.75" stop-color="#4c9cc4"/><stop offset="1" stop-color="#3576a0"/></radialGradient>
<radialGradient id="shade" cx="630" cy="300" r="175" gradientUnits="userSpaceOnUse"><stop offset="0.5" stop-color="#000" stop-opacity="0"/><stop offset="0.85" stop-color="#0a1a28" stop-opacity="0.25"/><stop offset="1" stop-color="#0a1a28" stop-opacity="0.6"/></radialGradient>
<radialGradient id="shadow" cx="680" cy="462" r="120" gradientUnits="userSpaceOnUse"><stop offset="0" stop-color="#141c24" stop-opacity="0.8"/><stop offset="1" stop-color="#141c24" stop-opacity="0"/></radialGradient>

<filter id="bl" filterUnits="userSpaceOnUse" x="291" y="230" width="744" height="237"><feGaussianBlur stdDeviation="1.6"/></filter>
<filter id="bl1"><feGaussianBlur stdDeviation="1"/></filter>
<clipPath id="gclip"><circle cx="667" cy="350" r="110"/></clipPath>
</defs>
<rect x="291" y="230" width="744" height="237" fill="#263542"/>
<rect x="291" y="230" width="744" height="1" fill="#1b2630"/>
<ellipse cx="690" cy="455" rx="120" ry="22" fill="url(#shadow)" opacity="0.7"/>
<circle cx="667" cy="350" r="175" fill="url(#glow)" mask="url(#gmask)"/>
<circle cx="667" cy="350" r="110" fill="url(#ocean)"/>
<g clip-path="url(#gclip)">
<g filter="url(#bl)">
<path d="M570 300Q585 265 640 245Q660 240 665 250Q630 262 605 290Q590 305 575 318Z" fill="#c8c0a0"/><path d="M612 270Q640 252 680 250Q700 262 672 275Q640 282 618 285Z" fill="#f0f2f4"/><path d="M660 240Q700 238 730 252Q728 282 712 300Q695 296 690 286Q680 280 685 266Q672 252 660 240Z" fill="#f2f5f6"/><path d="M712 252Q745 258 768 284Q745 292 720 290Q714 270 712 252Z" fill="#9fae82"/>

<path d="M650 285Q672 278 690 288Q682 300 660 300Z" fill="#5ab4d8"/>
<path d="M585 292Q600 280 620 288Q612 300 595 305Z" fill="#d8e6ea"/>
<path d="M636 300Q655 288 680 292Q700 282 740 280Q770 296 776 335Q772 352 756 352Q738 344 722 348Q700 354 680 350Q660 356 642 350Q630 330 636 300Z" fill="#88a66a"/>
<path d="M712 286Q750 276 780 300L782 372Q770 368 758 356Q745 330 716 318Z" fill="#98a676"/>
<path d="M660 300Q675 293 690 300Q693 312 678 316Q662 312 660 300Z" fill="#7a9c5c"/>
<path d="M598 396Q604 372 636 366Q676 360 716 368Q744 378 748 398Q738 426 722 442Q696 458 662 458Q636 442 622 420Q602 410 598 396Z" fill="#d4b89c"/>
<path d="M628 420Q652 430 690 424Q720 418 740 412Q732 440 706 455Q672 462 652 455Q634 440 628 420Z" fill="#90a676"/>
<path d="M700 360Q740 348 782 360L780 395Q760 408 748 404Q726 398 706 384Z" fill="#ddd0c0"/>
<path d="M636 352Q668 346 702 354Q714 362 702 370Q670 374 642 368Z" fill="#82c4de"/>
<path d="M716 334Q736 328 746 338Q740 347 722 345Z" fill="#70bada"/>
<path d="M742 400Q762 392 780 398Q775 432 750 448Q736 432 742 400Z" fill="#5aa6cc"/>
<path d="M600 320Q620 312 632 330Q622 348 600 342Z" fill="#bcdbe8" opacity="0.7"/>
</g>
<circle cx="667" cy="350" r="110" fill="url(#shade)"/>
</g>
<g fill="none" stroke="#d8dfe6" stroke-width="0.7" opacity="0.75">
<path d="M717 292L753 241H843"/>
<path d="M720 434H862"/>
<path d="M657 365V440"/>
<path d="M726 436L714 424"/>
<polygon points="704,420 708,414 716,414 720,420 716,426 708,426"/>
<path d="M645 335Q660 320 680 330" stroke-dasharray="1 1"/>
<path d="M720 370Q750 360 758 385Q750 405 725 400" stroke-dasharray="1 1"/>
</g>
<g fill="#e6ebf0">
<rect x="819" y="235" width="24" height="1" opacity="0.55"/>
<rect x="807" y="245" width="36" height="0.9" opacity="0.6"/><rect x="802" y="248.5" width="41" height="0.9" opacity="0.55"/><rect x="799" y="252" width="44" height="0.9" opacity="0.55"/>
<path d="M783 259.5Q778 259.5 778 265V273Q778 275 775.5 275.5Q778 276 778 278V286Q778 291.5 783 291.5" fill="none" stroke="#eef2f5" stroke-width="1.3"/>
<text x="784.5" y="273.5" font-size="5.5" font-family="Liberation Sans" fill="#eef2f5">7/10</text>
<text x="784.5" y="286.5" font-size="5.5" font-family="Liberation Sans" fill="#eef2f5">4/10</text>
<g opacity="1"><circle cx="801.00" cy="264.8" r="1.3"/><path d="M799.30 266.5h3.4v3.8h-0.5v2.7h-2.4v-2.7h-0.5Z"/></g><g opacity="1"><circle cx="805.45" cy="264.8" r="1.3"/><path d="M803.75 266.5h3.4v3.8h-0.5v2.7h-2.4v-2.7h-0.5Z"/></g><g opacity="1"><circle cx="809.90" cy="264.8" r="1.3"/><path d="M808.20 266.5h3.4v3.8h-0.5v2.7h-2.4v-2.7h-0.5Z"/></g><g opacity="0.45"><circle cx="814.35" cy="264.8" r="1.3"/><path d="M812.65 266.5h3.4v3.8h-0.5v2.7h-2.4v-2.7h-0.5Z"/></g><g opacity="0.45"><circle cx="818.80" cy="264.8" r="1.3"/><path d="M817.10 266.5h3.4v3.8h-0.5v2.7h-2.4v-2.7h-0.5Z"/></g><g opacity="0.45"><circle cx="823.25" cy="264.8" r="1.3"/><path d="M821.55 266.5h3.4v3.8h-0.5v2.7h-2.4v-2.7h-0.5Z"/></g><g opacity="0.45"><circle cx="827.70" cy="264.8" r="1.3"/><path d="M826.00 266.5h3.4v3.8h-0.5v2.7h-2.4v-2.7h-0.5Z"/></g><g opacity="0.45"><circle cx="832.15" cy="264.8" r="1.3"/><path d="M830.45 266.5h3.4v3.8h-0.5v2.7h-2.4v-2.7h-0.5Z"/></g><g opacity="0.45"><circle cx="836.60" cy="264.8" r="1.3"/><path d="M834.90 266.5h3.4v3.8h-0.5v2.7h-2.4v-2.7h-0.5Z"/></g><g opacity="0.45"><circle cx="841.05" cy="264.8" r="1.3"/><path d="M839.35 266.5h3.4v3.8h-0.5v2.7h-2.4v-2.7h-0.5Z"/></g><g opacity="1"><circle cx="801.00" cy="278.3" r="1.3"/><path d="M799.30 280h3.4v3.8h-0.5v2.7h-2.4v-2.7h-0.5Z"/></g><g opacity="1"><circle cx="805.45" cy="278.3" r="1.3"/><path d="M803.75 280h3.4v3.8h-0.5v2.7h-2.4v-2.7h-0.5Z"/></g><g opacity="1"><circle cx="809.90" cy="278.3" r="1.3"/><path d="M808.20 280h3.4v3.8h-0.5v2.7h-2.4v-2.7h-0.5Z"/></g><g opacity="1"><circle cx="814.35" cy="278.3" r="1.3"/><path d="M812.65 280h3.4v3.8h-0.5v2.7h-2.4v-2.7h-0.5Z"/></g><g opacity="1"><circle cx="818.80" cy="278.3" r="1.3"/><path d="M817.10 280h3.4v3.8h-0.5v2.7h-2.4v-2.7h-0.5Z"/></g><g opacity="1"><circle cx="823.25" cy="278.3" r="1.3"/><path d="M821.55 280h3.4v3.8h-0.5v2.7h-2.4v-2.7h-0.5Z"/></g><g opacity="0.45"><circle cx="827.70" cy="278.3" r="1.3"/><path d="M826.00 280h3.4v3.8h-0.5v2.7h-2.4v-2.7h-0.5Z"/></g><g opacity="0.45"><circle cx="832.15" cy="278.3" r="1.3"/><path d="M830.45 280h3.4v3.8h-0.5v2.7h-2.4v-2.7h-0.5Z"/></g><g opacity="0.45"><circle cx="836.60" cy="278.3" r="1.3"/><path d="M834.90 280h3.4v3.8h-0.5v2.7h-2.4v-2.7h-0.5Z"/></g><g opacity="0.45"><circle cx="841.05" cy="278.3" r="1.3"/><path d="M839.35 280h3.4v3.8h-0.5v2.7h-2.4v-2.7h-0.5Z"/></g>
<rect x="473" y="282.5" width="20" height="0.8" opacity="0.35"/><rect x="473" y="287.5" width="42" height="0.8" opacity="0.35"/>
<rect x="473" y="292.5" width="55" height="0.9" opacity="0.35"/>
<text x="489.5" y="304.3" font-size="5.6" font-family="Liberation Sans" fill="#e8ecf0">87K</text>
<text x="489.5" y="316.1" font-size="5.6" font-family="Liberation Sans" fill="#e8ecf0">73K</text>
<text x="489.5" y="327.9" font-size="5.6" font-family="Liberation Sans" fill="#e8ecf0">52K</text>
<text x="489.5" y="339.7" font-size="5.6" font-family="Liberation Sans" fill="#e8ecf0">35K</text>
<path d="M474.5 302H483M478.5 298.5L480 302L478.5 305.5" stroke="#eef2f5" stroke-width="1.1" fill="none"/>
<rect x="474" y="310" width="8" height="5.5" rx="2"/><rect x="475.5" y="320.5" width="5.5" height="6.5" rx="1"/><rect x="474.5" y="327.5" width="7" height="1"/><path d="M473 336.5H484L482 340H475Z"/><rect x="477" y="334" width="4" height="2.5"/>

<path id="st" d="M0.00,-2.30 L0.59,-0.81 L2.19,-0.71 L0.95,0.31 L1.35,1.86 L0.00,1.00 L-1.35,1.86 L-0.95,0.31 L-2.19,-0.71 L-0.59,-0.81Z"/><use href="#st" x="507.00" y="302.20" fill="#f2f5f8"/><use href="#st" x="511.85" y="302.20" fill="#f2f5f8"/><use href="#st" x="516.70" y="302.20" fill="#f2f5f8"/><use href="#st" x="521.55" y="302.20" fill="#f2f5f8"/><use href="#st" x="526.40" y="302.20" fill="#f2f5f8"/><use href="#st" x="531.25" y="302.20" fill="#f2f5f8"/><use href="#st" x="536.10" y="302.20" fill="#f2f5f8"/><use href="#st" x="540.95" y="302.20" fill="#8a9299"/><use href="#st" x="545.80" y="302.20" fill="#8a9299"/><use href="#st" x="507.00" y="314.00" fill="#f2f5f8"/><use href="#st" x="511.85" y="314.00" fill="#f2f5f8"/><use href="#st" x="516.70" y="314.00" fill="#f2f5f8"/><use href="#st" x="521.55" y="314.00" fill="#f2f5f8"/><use href="#st" x="526.40" y="314.00" fill="#f2f5f8"/><use href="#st" x="531.25" y="314.00" fill="#8a9299"/><use href="#st" x="507.00" y="325.80" fill="#f2f5f8"/><use href="#st" x="511.85" y="325.80" fill="#f2f5f8"/><use href="#st" x="516.70" y="325.80" fill="#f2f5f8"/><use href="#st" x="521.55" y="325.80" fill="#f2f5f8"/><use href="#st" x="526.40" y="325.80" fill="#f2f5f8"/><use href="#st" x="531.25" y="325.80" fill="#8a9299"/><use href="#st" x="536.10" y="325.80" fill="#8a9299"/><use href="#st" x="507.00" y="337.60" fill="#f2f5f8"/><use href="#st" x="511.85" y="337.60" fill="#f2f5f8"/><use href="#st" x="516.70" y="337.60" fill="#8a9299"/><use href="#st" x="521.55" y="337.60" fill="#8a9299"/><use href="#st" x="526.40" y="337.60" fill="#8a9299"/><use href="#st" x="531.25" y="337.60" fill="#8a9299"/><use href="#st" x="536.10" y="337.60" fill="#8a9299"/><use href="#st" x="540.95" y="337.60" fill="#8a9299"/>
<rect x="474" y="415" width="46" height="1.4" opacity="0.65"/>
<rect x="479" y="424" width="101" height="0.7" opacity="0.4"/><rect x="479" y="431" width="101" height="0.7" opacity="0.4"/><rect x="479" y="437.5" width="101" height="0.7" opacity="0.4"/><rect x="479" y="444.5" width="101" height="0.7" opacity="0.4"/><rect x="479" y="451" width="101" height="0.7" opacity="0.4"/>
<rect x="492.0" y="434.3" width="5.2" height="3.5"/><rect x="498.4" y="432.2" width="5.2" height="5.6"/><rect x="504.8" y="429.2" width="5.2" height="8.6"/><rect x="511.2" y="427.1" width="5.2" height="10.7"/><rect x="517.6" y="429.2" width="5.2" height="8.6"/><rect x="524.0" y="431.8" width="5.2" height="6"/><rect x="530.4" y="434.90000000000003" width="5.2" height="2.9"/><rect x="536.8" y="437.8" width="5.2" height="3"/><rect x="543.2" y="437.8" width="5.2" height="5.3"/><rect x="549.6" y="437.8" width="5.2" height="8.5"/><rect x="556.0" y="437.8" width="5.2" height="11.4"/><rect x="562.4" y="437.8" width="5.2" height="5.3"/><rect x="568.8" y="437.8" width="5.2" height="3.2"/><rect x="575.2" y="437.8" width="5.2" height="6.3"/>

<path d="M809 365Q804 364 802 368Q797 368 797 373Q794 376 796 380Q795 383 800 383Q805 384 807.5 382L807 394H812.5L811.5 382Q815 384 819 383Q824 383 823 379Q825 375 822 372Q822 367 817 367Q814 364 809 365Z" fill="#f4f6f8"/>
<rect x="799" y="351.5" width="24" height="0.9" opacity="0.6"/><rect x="811" y="355.5" width="12" height="0.9" opacity="0.6"/><rect x="792" y="359" width="32" height="0.9" opacity="0.7"/>
<rect x="837" y="351.5" width="24" height="0.9" opacity="0.6"/><rect x="850" y="355.5" width="11" height="0.9" opacity="0.6"/><rect x="830" y="359" width="31" height="0.9" opacity="0.7"/>
<rect x="798" y="397.5" width="25" height="0.9" opacity="0.5"/><rect x="804" y="400.8" width="19" height="0.9" opacity="0.5"/><rect x="804" y="404.1" width="19" height="0.9" opacity="0.5"/><rect x="798" y="407.4" width="25" height="0.9" opacity="0.5"/><rect x="800" y="410.7" width="23" height="0.9" opacity="0.5"/><rect x="804" y="414.0" width="19" height="0.9" opacity="0.5"/><rect x="802" y="417.3" width="21" height="0.9" opacity="0.5"/><rect x="799" y="420.6" width="24" height="0.9" opacity="0.5"/><rect x="804" y="423.9" width="19" height="0.9" opacity="0.5"/><rect x="834" y="364.5" width="27" height="0.9" opacity="0.5"/><rect x="842" y="367.8" width="19" height="0.9" opacity="0.5"/><rect x="834" y="371.1" width="27" height="0.9" opacity="0.5"/><rect x="840" y="374.4" width="21" height="0.9" opacity="0.5"/><rect x="838" y="377.7" width="23" height="0.9" opacity="0.5"/><rect x="842" y="381.0" width="19" height="0.9" opacity="0.5"/><rect x="836" y="384.3" width="25" height="0.9" opacity="0.5"/><rect x="836" y="387.6" width="25" height="0.9" opacity="0.5"/><rect x="837" y="390.9" width="24" height="0.9" opacity="0.5"/><rect x="840" y="394.2" width="21" height="0.9" opacity="0.5"/><rect x="842" y="397.5" width="19" height="0.9" opacity="0.5"/><rect x="842" y="400.8" width="19" height="0.9" opacity="0.5"/><rect x="840" y="404.1" width="21" height="0.9" opacity="0.5"/><rect x="840" y="407.4" width="21" height="0.9" opacity="0.5"/><rect x="837" y="410.7" width="24" height="0.9" opacity="0.5"/><rect x="836" y="414.0" width="25" height="0.9" opacity="0.5"/><rect x="836" y="417.3" width="25" height="0.9" opacity="0.5"/><rect x="837" y="420.6" width="24" height="0.9" opacity="0.5"/><rect x="836" y="423.9" width="25" height="0.9" opacity="0.5"/>
<rect x="623" y="427" width="22" height="1.5" opacity="0.6"/><rect x="612" y="432" width="45" height="0.8" opacity="0.45"/><rect x="612" y="435" width="45" height="0.8" opacity="0.45"/><rect x="612" y="438" width="40" height="0.8" opacity="0.45"/>
<g fill="#f4f6f8"><circle cx="688" cy="343" r="2.5"/><circle cx="669" cy="327" r="2.2"/><circle cx="700" cy="319" r="2"/></g>
</g>
</svg>
<div class="t bl" id="L0" style="left:291px;top:494px;font-size:13.5px;line-height:21px;height:21px;letter-spacing:0.104px;-webkit-text-stroke:0.2px currentColor"><b>Earth</b> (or the Earth), otherwise known as the <b>world</b> (especially</div>
<div class="t bl" id="L1" style="left:291px;top:515px;font-size:13.5px;line-height:21px;height:21px;letter-spacing:0.198px;-webkit-text-stroke:0.2px currentColor">in geopolitics and geography), is the third <span class="lnk">planet</span> from the <span class="lnk">Sun</span>,</div>
<div class="t bl" id="L2" style="left:291px;top:536px;font-size:13.5px;line-height:21px;height:21px;letter-spacing:0.242px;-webkit-text-stroke:0.2px currentColor">and the densest and fifth-largest of the eight planets in the</div>
<div class="t bl" id="L3" style="left:291px;top:557px;font-size:13.5px;line-height:21px;height:21px;letter-spacing:0.033px;-webkit-text-stroke:0.2px currentColor"><span class="lnk">Solar System</span>. It is also the largest of the Solar System&#39;s four</div>
<div class="t bl" id="L4" style="left:291px;top:578px;font-size:13.5px;line-height:21px;height:21px;letter-spacing:0.227px;-webkit-text-stroke:0.2px currentColor"><span class="lnk">terrestrial planets</span>. It is sometimes referred to as the <span class="lnk">World</span>,</div>
<div class="t bl" id="L5" style="left:291px;top:599px;font-size:13.5px;line-height:21px;height:21px;letter-spacing:0.076px;-webkit-text-stroke:0.2px currentColor">the Blue Planet, or by its Latin name, <span class="lnk">Terra</span>.</div>
<div class="t bl" id="L6" style="left:290px;top:646px;font-size:13.5px;line-height:21px;height:21px;letter-spacing:0.205px;-webkit-text-stroke:0.2px currentColor">Home to millions of <span class="lnk">species</span>, including <span class="lnk">humans</span>, Earth is the only place in the universe where <span class="lnk">life</span> is known to exist. The</div>
<div class="t bl" id="L7" style="left:290px;top:667px;font-size:13.5px;line-height:21px;height:21px;letter-spacing:0.179px;-webkit-text-stroke:0.2px currentColor">planet formed <span class="lnk">4.54 billion years</span> ago, and <span class="lnk">life appeared</span> on its surface within one billion years. Earth&#39;s <span class="lnk">biosphere</span> has</div>
<div class="a" style="left:682px;top:495px;width:354px;height:121px;background:#fff;border:1px solid #f9d374;border-right:1px dashed #f9d374"></div>
<div class="a" style="left:683px;top:526px;width:351px;height:29px;background:#fff2cf"></div>
<div class="a" style="left:682px;top:525px;width:353px;height:1px;background:#f9d374"></div>
<div class="a" style="left:682px;top:555px;width:353px;height:1px;background:#f9d374"></div>
<div class="a" style="left:683px;top:586px;width:351px;height:29px;background:#fff2cf"></div>
<div class="a" style="left:682px;top:585px;width:353px;height:1px;background:#f9d374"></div>
<div class="a" style="left:775px;top:495px;width:1px;height:121px;background:#f9d374"></div>
<div class="a" style="left:900px;top:495px;width:1px;height:121px;background:#f9d374"></div>
<div class="t" style="left:688px;top:494px;font-size:14px;line-height:30px;color:#111">Depth <span style="font-size:9px">km</span></div>
<div class="t" style="left:781px;top:494px;font-size:14px;line-height:30px;color:#111">Component layer</div>
<div class="t" style="left:906px;top:494px;font-size:14px;line-height:30px;color:#111">Density <span style="font-size:9px">g/cm&sup3;</span></div>
<div class="t" style="left:688px;top:524px;font-size:14px;line-height:30px;font-weight:bold;color:#111">0–60</div>
<div class="t" style="left:781px;top:524px;font-size:14px;line-height:30px;color:#111">Lithosphere</div>
<div class="t" style="left:906px;top:524px;font-size:14px;line-height:30px;color:#111">—</div>
<div class="t" style="left:688px;top:554px;font-size:14px;line-height:30px;font-weight:bold;color:#111">0–35</div>
<div class="t" style="left:781px;top:554px;font-size:14px;line-height:30px;color:#111">Crust</div>
<div class="t" style="left:906px;top:554px;font-size:14px;line-height:30px;color:#111">2.2–2.9</div>
<div class="t" style="left:688px;top:584px;font-size:14px;line-height:30px;font-weight:bold;color:#111">35–60</div>
<div class="t" style="left:781px;top:584px;font-size:14px;line-height:30px;color:#111">Upper mantle</div>
<div class="t" style="left:906px;top:584px;font-size:14px;line-height:30px;color:#111">3.4–4.4</div>
<svg style="left:14px;top:168px" width="15" height="16"><rect x="0" y="0" width="8" height="3" rx="0.6" fill="#1e4fb8"/><rect x="1" y="1" width="6" height="1" fill="#8fb0ea"/><path d="M2.5 3V13.5H6M2.5 5.5H6M2.5 9.5H6" fill="none" stroke="#44546a" stroke-width="1"/>
<rect x="6" y="4" width="9" height="3" rx="0.6" fill="#1e4fb8"/><rect x="7" y="5" width="7" height="1" fill="#8fb0ea"/>
<rect x="6" y="8" width="9" height="3" rx="0.6" fill="#1e4fb8"/><rect x="7" y="9" width="7" height="1" fill="#8fb0ea"/>
<rect x="6" y="12" width="9" height="3" rx="0.6" fill="#1e4fb8"/><rect x="7" y="13" width="7" height="1" fill="#8fb0ea"/></svg>
<div class="t" style="left:34px;top:171px;font-size:11px;color:#3a3a3a">Table of contents</div>
<svg style="left:256px;top:171px" width="8" height="9"><rect x="1.5" y="0.5" width="4" height="5.5" fill="none" stroke="#6e6e6e"/><rect x="3" y="0.5" width="2" height="5.5" fill="#6e6e6e"/><rect x="0" y="5.5" width="8" height="1.2" fill="#6e6e6e"/><rect x="3" y="6" width="1.3" height="3" fill="#6e6e6e"/></svg>
<svg style="left:1077px;top:167px" width="16" height="16"><use href="#lib"/></svg>
<div class="t" style="left:1096px;top:171px;font-size:11px;color:#3a3a3a">Library</div>
<svg style="left:1236px;top:172px" width="9" height="7"><rect x="0.5" y="0.5" width="8" height="6" fill="none" stroke="#6e6e6e"/><rect x="0" y="0" width="9" height="2" fill="#6e6e6e"/></svg>
<svg style="left:1256px;top:171px" width="8" height="9"><rect x="1.5" y="0.5" width="4" height="5.5" fill="none" stroke="#6e6e6e"/><rect x="3" y="0.5" width="2" height="5.5" fill="#6e6e6e"/><rect x="0" y="5.5" width="8" height="1.2" fill="#6e6e6e"/><rect x="3" y="6" width="1.3" height="3" fill="#6e6e6e"/></svg>
<svg style="left:1077px;top:424px" width="15" height="11"><use href="#kw"/></svg>
<div class="t" style="left:1096px;top:425px;font-size:11px;color:#3a3a3a">Keywords</div>
<svg style="left:1236px;top:426px" width="9" height="7"><rect x="0.5" y="0.5" width="8" height="6" fill="none" stroke="#6e6e6e"/><rect x="0" y="0" width="9" height="2" fill="#6e6e6e"/></svg>
<svg style="left:1256px;top:425px" width="8" height="9"><rect x="1.5" y="0.5" width="4" height="5.5" fill="none" stroke="#6e6e6e"/><rect x="3" y="0.5" width="2" height="5.5" fill="#6e6e6e"/><rect x="0" y="5.5" width="8" height="1.2" fill="#6e6e6e"/><rect x="3" y="6" width="1.3" height="3" fill="#6e6e6e"/></svg>
<svg style="left:0;top:0" width="1280" height="160" viewBox="0 0 1280 160">
<defs>
<linearGradient id="gy" x1="0" y1="0" x2="0" y2="1"><stop offset="0" stop-color="#fde58a"/><stop offset="0.5" stop-color="#ffc928"/><stop offset="1" stop-color="#fbe07a"/></linearGradient>
<linearGradient id="gb" x1="0" y1="0" x2="0" y2="1"><stop offset="0" stop-color="#7aa6ec"/><stop offset="1" stop-color="#2456c0"/></linearGradient>
<linearGradient id="gg" x1="0" y1="0" x2="0" y2="1"><stop offset="0" stop-color="#8fe27a"/><stop offset="1" stop-color="#3aa62a"/></linearGradient>
<radialGradient id="gi" cx="0.4" cy="0.3" r="0.7"><stop offset="0" stop-color="#5a9cf0"/><stop offset="1" stop-color="#0b3f9e"/></radialGradient>
<linearGradient id="gpg" x1="0" y1="0" x2="1" y2="1"><stop offset="0" stop-color="#ffffff"/><stop offset="1" stop-color="#e3eaf5"/></linearGradient>
<symbol id="tocb" viewBox="0 0 16 15"><rect x="0" y="0" width="8" height="3" fill="#1e4fb8"/><rect x="1" y="1" width="6" height="1" fill="#8fb0ea"/><path d="M2.5 3V13.5H6M2.5 5.5H6M2.5 9.5H6" fill="none" stroke="#44546a" stroke-width="1"/><rect x="6" y="4" width="9" height="3" fill="#1e4fb8"/><rect x="7" y="5" width="7" height="1" fill="#8fb0ea"/><rect x="6" y="8" width="9" height="3" fill="#1e4fb8"/><rect x="7" y="9" width="7" height="1" fill="#8fb0ea"/><rect x="6" y="12" width="9" height="3" fill="#1e4fb8"/><rect x="7" y="13" width="7" height="1" fill="#8fb0ea"/></symbol>
</defs>
<!-- title bar: app icon -->
<g transform="rotate(-14 16 17)"><rect x="8.5" y="9.5" width="15" height="15" rx="2" fill="#6aae2c"/><rect x="8.5" y="9.5" width="15" height="6" rx="2" fill="#8cc83e"/><path d="M12 14Q16 11.5 20 13.5" fill="none" stroke="#e6f3d6" stroke-width="1"/><rect x="12" y="16" width="1.4" height="4" fill="#d8ecc4"/><path d="M15.5 16.5Q18.5 15 19 17.5Q19 19 17 19.5V21" fill="none" stroke="#eef7e4" stroke-width="1.4"/><rect x="16.4" y="22" width="1.4" height="1.2" fill="#eef7e4"/></g>
<!-- save (disabled) -->
<g fill="none" stroke="#6d8ec8" stroke-width="1.4"><path d="M38.7 10.7H50.3L52.3 12.7V23.3H38.7Z"/><path d="M42 10.7V14.5H49V10.7"/><path d="M41 23.3V18H50V23.3"/></g><rect x="46" y="11.5" width="1.5" height="2.2" fill="#6d8ec8"/>
<!-- undo/redo disabled -->
<g fill="none" stroke="#6d8ec8" stroke-width="1.6"><path d="M65 16.5Q68 13 72 14.5Q75.5 16.5 74 21.5"/><path d="M97 16.5Q94 13 90 14.5Q86.5 16.5 88 21.5"/></g>
<path d="M63 12V17.5H68.5Z" fill="#6d8ec8"/><path d="M99 12V17.5H93.5Z" fill="#6d8ec8"/>
<!-- qat dropdown -->
<rect x="116" y="13.5" width="6" height="1.2" fill="#fff"/><path d="M116 16.5H122L119 19.5Z" fill="#fff"/>
<!-- window buttons -->
<g fill="#fff" shape-rendering="crispEdges"><rect x="1109" y="11" width="5" height="1"/><rect x="1108" y="12" width="7" height="1"/><rect x="1108" y="13" width="2" height="2"/><rect x="1113" y="13" width="2" height="2"/><rect x="1112" y="15" width="2" height="1"/><rect x="1111" y="16" width="2" height="2"/><rect x="1111" y="19" width="2" height="2"/></g>
<g fill="#fff" shape-rendering="crispEdges"><rect x="1142" y="11" width="13" height="1"/><rect x="1142" y="13" width="13" height="1"/><rect x="1142" y="11" width="1" height="10"/><rect x="1154" y="11" width="1" height="10"/><rect x="1142" y="20" width="13" height="1"/><rect x="1148" y="15" width="1" height="5"/><rect x="1147" y="16" width="3" height="1"/><rect x="1146" y="17" width="1" height="1"/><rect x="1150" y="17" width="1" height="1"/></g>
<rect x="1180" y="18" width="9" height="2" fill="#fff" shape-rendering="crispEdges"/>
<g fill="#fff" shape-rendering="crispEdges"><rect x="1215" y="11" width="11" height="2"/><rect x="1215" y="13" width="1" height="8"/><rect x="1225" y="13" width="1" height="8"/><rect x="1215" y="20" width="11" height="1"/></g>
<path d="M1251.5 11.5L1260.5 20.5M1260.5 11.5L1251.5 20.5" stroke="#fff" stroke-width="2"/>

<!-- Generate help: lightning + gear -->
<g transform="translate(39.5 88.7)">
<path d="M-1.2 -8.2L1.2 -8.2L1.6 -6.2L3.3 -5.5L4.9 -6.8L6.6 -5.1L5.3 -3.4L6 -1.7L8.1 -1.3V1.3L6 1.7L5.3 3.4L6.6 5.1L4.9 6.8L3.3 5.5L1.6 6.2L1.2 8.2H-1.2L-1.6 6.2L-3.3 5.5L-4.9 6.8L-6.6 5.1L-5.3 3.4L-6 1.7L-8.1 1.3V-1.3L-6 -1.7L-5.3 -3.4L-6.6 -5.1L-4.9 -6.8L-3.3 -5.5L-1.6 -6.2Z" fill="#a3b4d2" stroke="#3f5b92" stroke-width="0.9"/>
<circle r="2.6" fill="#e6edf7" stroke="#3f5b92" stroke-width="0.9"/></g>
<path d="M32.3 68.3H46.8L35.3 79H42.8L25.5 94.5L31.3 82.3H24.3Z" fill="url(#gy)" stroke="#a0823a" stroke-width="0.9" stroke-linejoin="miter"/>
<path d="M33.2 69.5H44L34 78.5" fill="none" stroke="#fff6c8" stroke-width="0.8" opacity="0.8"/>

<!-- Project options -->
<path d="M82.5 68.5H96.8L103.5 75.2V96.5H82.5Z" fill="url(#gpg)" stroke="#7a8aa8"/><path d="M96.8 68.5V75.2H103.5" fill="#dbe6f7" stroke="#7a8aa8"/>
<rect x="93.5" y="78.3" width="17" height="15.2" rx="1.2" fill="#eef3fb" stroke="#7f93b8"/>
<rect x="100.5" y="81.5" width="6.5" height="3" fill="#f4f4fa" stroke="#6b6b7a"/><rect x="100.5" y="87.5" width="6.5" height="3" fill="#f4f4fa" stroke="#6b6b7a"/>
<circle cx="91" cy="86" r="6.9" fill="url(#gi)"/>
<rect x="89.7" y="85" width="2.6" height="5" fill="#fff"/><rect x="88.6" y="89.2" width="4.8" height="1.3" fill="#fff"/><rect x="89.2" y="85" width="2" height="1.1" fill="#fff"/><circle cx="91.2" cy="82.6" r="1.3" fill="#fff"/>

<!-- Analyze project -->
<path d="M139.5 69.5H153.5L160.5 76.5V97.3H139.5Z" fill="url(#gpg)" stroke="#6f84a6"/><path d="M153.5 69.5V76.5H160.5" fill="#dbe6f7" stroke="#6f84a6"/>
<path d="M149.5 72.8L154 77.3L149.5 81.8L145 77.3Z" fill="#ee5a26"/>
<path d="M149.5 81.8V84.5M144.5 88V84.5H154.5V88" fill="none" stroke="#3e64a6" stroke-width="1"/>
<rect x="141.5" y="88.3" width="6.5" height="5.5" fill="#49b83c" stroke="#1f8a1a"/><rect x="151.5" y="88.3" width="6.5" height="5.5" fill="#49b83c" stroke="#1f8a1a"/>
<path d="M160.5 90.5L165.5 96.5" stroke="#7b7b7b" stroke-width="2.2" stroke-linecap="round"/>
<circle cx="157" cy="86.8" r="5.2" fill="#b8d8ee" stroke="#8f8f8f" stroke-width="1.4"/><path d="M153 88Q157 85 161 88V90Q157 92 153 90Z" fill="#9fcf9a" opacity="0.8"/>

<!-- separator handled in html -->
<!-- Add topic -->
<rect x="202.3" y="69.3" width="12.5" height="4.4" fill="url(#gb)" stroke="#1f4aa8" stroke-width="0.7"/>
<path d="M206.5 73.7V91.5" stroke="#56606e" stroke-width="1"/>
<g fill="#fbf8ee" stroke="#56606e" stroke-width="0.9"><rect x="204.2" y="77.3" width="4.6" height="4.5"/><rect x="204.2" y="84.2" width="4.6" height="4.5"/><rect x="204.2" y="91.1" width="4.6" height="4.5"/></g>
<g fill="#56606e"><rect x="206" y="79" width="1" height="1"/><rect x="206" y="86" width="1" height="1"/><rect x="206" y="93" width="1" height="1"/></g>
<path d="M209 79.5H215.5M209 86.5H215.5M209 93.5H215.5" stroke="#56606e" stroke-width="1"/>
<g fill="url(#gb)" stroke="#1f4aa8" stroke-width="0.7"><rect x="215.5" y="77.2" width="12.5" height="4.5"/><rect x="215.5" y="84.2" width="12.5" height="4.5"/><rect x="215.5" y="91.1" width="12.5" height="4.5"/></g>
<path d="M222.2 67.2H227V71.2H231V76H227V79.8H222.2V76H218.2V71.2H222.2Z" fill="url(#gg)" stroke="#1d8a14" stroke-width="0.9"/>

<!-- TOC small buttons -->
<use href="#tocb" x="249" y="67" width="16" height="15"/>
<rect x="258" y="68" width="7" height="3" fill="#e8261e"/><rect x="259" y="69" width="5" height="1" fill="#ffb0a8"/>
<rect x="309.5" y="71.5" width="15" height="6" fill="#fff" stroke="#6a7ea0"/><path d="M311 74.5H318" stroke="#9aa8c0"/>
<path d="M320.5 68V81.5M317.5 67.5Q320.5 67.5 320.5 69.5Q320.5 67.5 323.5 67.5M317.5 82Q320.5 82 320.5 80Q320.5 82 323.5 82" fill="none" stroke="#3a3a48" stroke-width="1"/>
<use href="#tocb" x="249" y="91" width="16" height="15"/>
<path d="M255.5 102.5L256.5 99L263 92.5L265 94.5L258.5 101Z" fill="#f0c030" stroke="#7a5a10" stroke-width="0.7"/><path d="M263 92.5L264 91.5L266 93.5L265 94.5Z" fill="#e23a30"/><path d="M255.5 102.5L256.2 100.3L257.7 101.8Z" fill="#222"/>
<path d="M361.5 96.5H367.5L364.5 99.5Z" fill="#6a6a6a"/>
<!-- arrows -->
<g fill="url(#gb)" stroke="#1f4fb0" stroke-width="0.8" stroke-linejoin="round">
<path d="M256.5 115L262 121H259V127H254V121H251Z"/>
<path d="M274 121.5L280 115.8V119H286V124H280V127.2Z"/>
<path d="M310 121.5L304 115.8V119H298V124H304V127.2Z"/>
<path d="M328.5 127L334 121H331V115H326V121H323Z"/>
</g>
<rect x="348.5" y="115.5" width="14" height="13" fill="#fff" stroke="#6c80a4"/><rect x="348.5" y="115.5" width="14" height="3" fill="#8aa6d6"/>
<path d="M349 122H362M349 125.5H362M353 118.5V128.5M357.5 118.5V128.5" stroke="#a8b6cc" stroke-width="0.8"/>
<path d="M360.5 124.5L363.5 128.5" stroke="#555" stroke-width="2" stroke-linecap="round"/>
<circle cx="358" cy="122" r="4.3" fill="#9cc6ee" stroke="#7a7a7a" stroke-width="1.2"/><circle cx="357" cy="121" r="1.8" fill="#e6f2fc" opacity="0.8"/>

<!-- Add keyword -->
<rect x="404.5" y="71.3" width="14" height="5.3" rx="2.2" fill="#6ad05a" stroke="#1f9a18" stroke-width="0.9"/>
<g fill="#2b3a60" shape-rendering="crispEdges"><rect x="407" y="74" width="1" height="1"/><rect x="408" y="75" width="1" height="1"/><rect x="409" y="74" width="1" height="1"/><rect x="410" y="75" width="1" height="1"/><rect x="411" y="74" width="1" height="1"/><rect x="412" y="75" width="1" height="1"/><rect x="413" y="74" width="1" height="1"/><rect x="414" y="75" width="1" height="1"/><rect x="415" y="74" width="1" height="1"/><rect x="416" y="75" width="1" height="1"/></g>
<path d="M419.5 74H421" stroke="#2b3a60" stroke-width="1"/>
<g fill="#2b3a66" shape-rendering="crispEdges"><rect x="410" y="81" width="1" height="1"/><rect x="411" y="80" width="1" height="1"/><rect x="412" y="81" width="1" height="1"/><rect x="413" y="80" width="1" height="1"/><rect x="414" y="81" width="1" height="1"/><rect x="415" y="80" width="1" height="1"/><rect x="416" y="81" width="1" height="1"/><rect x="417" y="80" width="1" height="1"/><rect x="418" y="81" width="1" height="1"/><rect x="419" y="80" width="1" height="1"/><rect x="420" y="81" width="1" height="1"/><rect x="421" y="80" width="1" height="1"/><rect x="422" y="81" width="1" height="1"/><rect x="423" y="80" width="1" height="1"/><rect x="424" y="81" width="1" height="1"/><rect x="425" y="80" width="1" height="1"/><rect x="426" y="81" width="1" height="1"/><rect x="427" y="80" width="1" height="1"/><rect x="428" y="81" width="1" height="1"/><rect x="429" y="80" width="1" height="1"/><rect x="430" y="81" width="1" height="1"/><rect x="431" y="80" width="1" height="1"/><rect x="405" y="85" width="1" height="1"/><rect x="406" y="86" width="1" height="1"/><rect x="407" y="85" width="1" height="1"/><rect x="408" y="86" width="1" height="1"/><rect x="409" y="85" width="1" height="1"/><rect x="410" y="86" width="1" height="1"/><rect x="411" y="85" width="1" height="1"/><rect x="412" y="86" width="1" height="1"/><rect x="413" y="85" width="1" height="1"/><rect x="414" y="86" width="1" height="1"/><rect x="415" y="85" width="1" height="1"/><rect x="416" y="86" width="1" height="1"/><rect x="417" y="85" width="1" height="1"/><rect x="419" y="85" width="1" height="1"/><rect x="420" y="86" width="1" height="1"/><rect x="421" y="85" width="1" height="1"/><rect x="422" y="86" width="1" height="1"/><rect x="423" y="85" width="1" height="1"/><rect x="424" y="86" width="1" height="1"/><rect x="425" y="85" width="1" height="1"/><rect x="426" y="86" width="1" height="1"/><rect x="427" y="85" width="1" height="1"/><rect x="428" y="86" width="1" height="1"/><rect x="429" y="85" width="1" height="1"/><rect x="412" y="91" width="1" height="1"/><rect x="413" y="90" width="1" height="1"/><rect x="414" y="91" width="1" height="1"/><rect x="415" y="90" width="1" height="1"/><rect x="416" y="91" width="1" height="1"/><rect x="417" y="90" width="1" height="1"/><rect x="418" y="91" width="1" height="1"/><rect x="419" y="90" width="1" height="1"/><rect x="420" y="91" width="1" height="1"/><rect x="421" y="90" width="1" height="1"/><rect x="422" y="91" width="1" height="1"/><rect x="423" y="90" width="1" height="1"/><rect x="424" y="91" width="1" height="1"/><rect x="425" y="90" width="1" height="1"/><rect x="426" y="91" width="1" height="1"/><rect x="427" y="90" width="1" height="1"/><rect x="428" y="91" width="1" height="1"/><rect x="429" y="90" width="1" height="1"/><rect x="430" y="91" width="1" height="1"/><rect x="431" y="90" width="1" height="1"/><rect x="432" y="91" width="1" height="1"/><rect x="433" y="90" width="1" height="1"/><rect x="405" y="95" width="1" height="1"/><rect x="406" y="96" width="1" height="1"/><rect x="407" y="95" width="1" height="1"/><rect x="408" y="96" width="1" height="1"/><rect x="409" y="95" width="1" height="1"/><rect x="410" y="96" width="1" height="1"/><rect x="411" y="95" width="1" height="1"/><rect x="412" y="96" width="1" height="1"/><rect x="413" y="95" width="1" height="1"/><rect x="414" y="96" width="1" height="1"/><rect x="415" y="95" width="1" height="1"/><rect x="416" y="96" width="1" height="1"/><rect x="417" y="95" width="1" height="1"/><rect x="418" y="96" width="1" height="1"/><rect x="419" y="95" width="1" height="1"/><rect x="420" y="96" width="1" height="1"/><rect x="421" y="95" width="1" height="1"/><rect x="424" y="96" width="1" height="1"/><rect x="425" y="95" width="1" height="1"/><rect x="426" y="96" width="1" height="1"/><rect x="427" y="95" width="1" height="1"/><rect x="428" y="96" width="1" height="1"/><rect x="429" y="95" width="1" height="1"/></g>
<path d="M425.5 68.3H429.5V72.3H433.5V76.3H429.5V80.5H425.5V76.3H421.3V72.3H425.5Z" fill="url(#gg)" stroke="#1d8a14" stroke-width="0.9"/>
<path d="M442.5 123H448.5L445.5 126Z" fill="#6a6a6a"/>

<!-- keywords disabled small -->
<g opacity="0.55">
<rect x="462" y="70" width="9" height="3.5" fill="#c8c8c8"/><rect x="471" y="66" width="6" height="2.5" fill="none" stroke="#b0b0b0" stroke-width="0.8"/>
<path d="M472 71H476M465 75H477M462 77.5H468M470 77.5H476M465 80H477" stroke="#9a9a9a" stroke-width="1"/>
<rect x="521.5" y="71.5" width="15" height="6" fill="#f4f4f4" stroke="#a8a8a8"/><path d="M532.5 68V81.5M529.5 67.5Q532.5 67.5 532.5 69.5Q532.5 67.5 535.5 67.5M529.5 82Q532.5 82 532.5 80Q532.5 82 535.5 82" fill="none" stroke="#999" stroke-width="1"/>
<rect x="461.5" y="95.3" width="8" height="5.5" rx="2.7" fill="none" stroke="#9a9a9a" stroke-width="1.3"/><rect x="467.5" y="95.3" width="8" height="5.5" rx="2.7" fill="none" stroke="#9a9a9a" stroke-width="1.3"/>
<path d="M462 121.5L468 115.8V119H474V124H468V127.2Z" fill="#d4d4d4" stroke="#a8a8a8" stroke-width="0.8"/>
<path d="M498 121.5L492 115.8V119H486V124H492V127.2Z" fill="#d4d4d4" stroke="#a8a8a8" stroke-width="0.8"/>
<rect x="510.5" y="116.5" width="12" height="12" fill="#f6f6f6" stroke="#a0a0a0"/><path d="M512.5 122.5L515 126L521 118.5" fill="none" stroke="#a0a0a0" stroke-width="1.2"/>
</g>

<!-- Add item -->
<rect x="646.5" y="68.5" width="19" height="13" fill="#fff" stroke="#4a6a9a"/><rect x="646.5" y="68.5" width="19" height="3.5" fill="#3a74dc"/>
<path d="M649 74.5H653M649 78.5H653" stroke="#4a72c0" stroke-width="1"/><rect x="656.5" y="73.5" width="6" height="2.5" fill="#fff" stroke="#3a62b0"/>
<rect x="642.5" y="80.5" width="16" height="16" fill="#f8faff" stroke="#4a6080"/>
<path d="M645 83.5H647M649 83.5H656M645 85.5H647M649 85.5H656M645 87.5H647M649 87.5H656M645 89.5H647M649 89.5H656M645 91.5H647M649 91.5H656M645 93.5H647M649 93.5H656" stroke="#4a6ab0" stroke-width="0.9"/>
<rect x="655.5" y="77.5" width="15" height="14" fill="#b2dcf8" stroke="#44586e"/>
<circle cx="666" cy="81.3" r="2.2" fill="#fbb98a"/>
<path d="M656 91L660 85.5L663.5 91Z" fill="#e8f0fa"/><path d="M662 91L666 86.5L670 91Z" fill="#a9c4e8"/>
<path d="M667.5 123H673.5L670.5 126Z" fill="#6a6a6a"/>
<path d="M46.5 123H52.5L49.5 126Z" fill="#6a6a6a"/>
<path d="M230 123H236L233 126Z" fill="#6a6a6a"/>

<!-- library disabled small -->
<g opacity="0.5">
<rect x="690.5" y="66.5" width="11" height="7" fill="#f0f0f0" stroke="#a4a4a4"/><rect x="690.5" y="66.5" width="11" height="2" fill="#b4b4b4"/>
<rect x="687.5" y="72.5" width="8" height="8.5" fill="#f4f4f4" stroke="#a4a4a4"/><rect x="694.5" y="72.5" width="8" height="7.5" fill="#d8d8d8" stroke="#a4a4a4"/>
<path d="M689 75H690M691.5 75H694M689 77H690M691.5 77H694M689 79H690M691.5 79H694" stroke="#a0a0a0"/>
<rect x="746.5" y="71.5" width="15" height="6" fill="#f4f4f4" stroke="#a8a8a8"/><path d="M757.5 68V81.5M754.5 67.5Q757.5 67.5 757.5 69.5Q757.5 67.5 760.5 67.5M754.5 82Q757.5 82 757.5 80Q757.5 82 760.5 82" fill="none" stroke="#999" stroke-width="1"/>
<path d="M689.5 103L690.5 99.5L697 93L699 95L692.5 101.5Z" fill="#e0e0e0" stroke="#9a9a9a" stroke-width="0.9"/>
<rect x="692.5" y="114.5" width="9" height="9" fill="#f6f6f6" stroke="#a8a8a8"/><path d="M697 114.5V123.5M692.5 119H701.5" stroke="#a8a8a8"/>
<path d="M686.5 127H691V124.5L695 128.5L691 132.5V130H686.5Z" fill="#e8e8e8" stroke="#a0a0a0" stroke-width="0.9"/>
</g>
<!-- collapse ribbon chevron -->
<path d="M1257.5 145.5L1261.5 141.5L1265.5 145.5" fill="none" stroke="#707070" stroke-width="1.6"/>
</svg>
</body></html>
